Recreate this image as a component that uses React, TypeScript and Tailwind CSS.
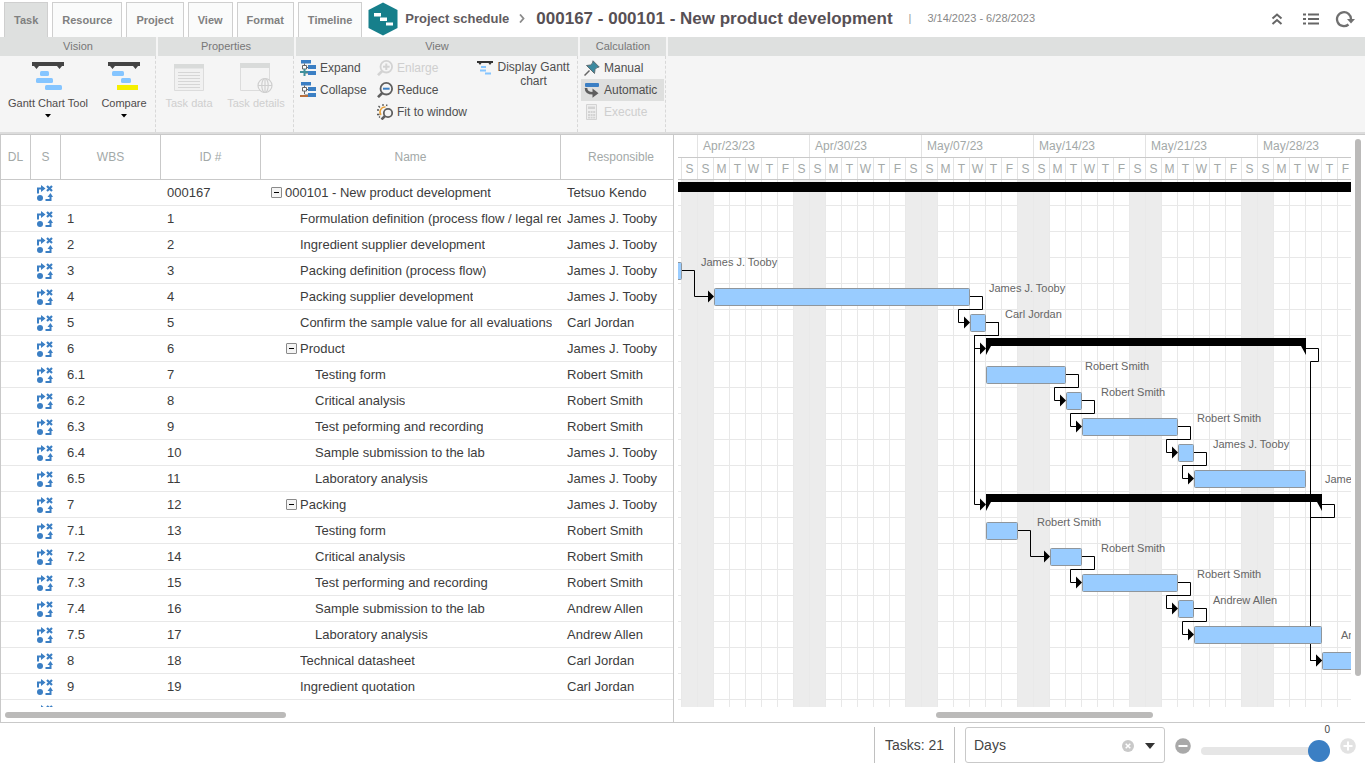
import React, { useState } from 'react';

type Row = {
  wbs: string;
  id: string;
  name: string;
  level: number;
  parent?: boolean;
  responsible: string;
  start?: number;
  days?: number;
};

// start is counted in days from the first Saturday of the chart
const rows: Row[] = [
  { wbs: '', id: '000167', name: '000101 - New product development', level: 0, parent: true, responsible: 'Tetsuo Kendo' },
  { wbs: '1', id: '1', name: 'Formulation definition (process flow / legal req', level: 1, responsible: 'James J. Tooby' },
  { wbs: '2', id: '2', name: 'Ingredient supplier development', level: 1, responsible: 'James J. Tooby' },
  { wbs: '3', id: '3', name: 'Packing definition (process flow)', level: 1, responsible: 'James J. Tooby', start: -3, days: 3 },
  { wbs: '4', id: '4', name: 'Packing supplier development', level: 1, responsible: 'James J. Tooby', start: 2, days: 16 },
  { wbs: '5', id: '5', name: 'Confirm the sample value for all evaluations', level: 1, responsible: 'Carl Jordan', start: 18, days: 1 },
  { wbs: '6', id: '6', name: 'Product', level: 1, parent: true, responsible: 'James J. Tooby', start: 19, days: 20 },
  { wbs: '6.1', id: '7', name: 'Testing form', level: 2, responsible: 'Robert Smith', start: 19, days: 5 },
  { wbs: '6.2', id: '8', name: 'Critical analysis', level: 2, responsible: 'Robert Smith', start: 24, days: 1 },
  { wbs: '6.3', id: '9', name: 'Test peforming and recording', level: 2, responsible: 'Robert Smith', start: 25, days: 6 },
  { wbs: '6.4', id: '10', name: 'Sample submission to the lab', level: 2, responsible: 'James J. Tooby', start: 31, days: 1 },
  { wbs: '6.5', id: '11', name: 'Laboratory analysis', level: 2, responsible: 'James J. Tooby', start: 32, days: 7 },
  { wbs: '7', id: '12', name: 'Packing', level: 1, parent: true, responsible: 'James J. Tooby', start: 19, days: 21 },
  { wbs: '7.1', id: '13', name: 'Testing form', level: 2, responsible: 'Robert Smith', start: 19, days: 2 },
  { wbs: '7.2', id: '14', name: 'Critical analysis', level: 2, responsible: 'Robert Smith', start: 23, days: 2 },
  { wbs: '7.3', id: '15', name: 'Test performing and recording', level: 2, responsible: 'Robert Smith', start: 25, days: 6 },
  { wbs: '7.4', id: '16', name: 'Sample submission to the lab', level: 2, responsible: 'Andrew Allen', start: 31, days: 1 },
  { wbs: '7.5', id: '17', name: 'Laboratory analysis', level: 2, responsible: 'Andrew Allen', start: 32, days: 8 },
  { wbs: '8', id: '18', name: 'Technical datasheet', level: 1, responsible: 'Carl Jordan', start: 40, days: 8 },
  { wbs: '9', id: '19', name: 'Ingredient quotation', level: 1, responsible: 'Carl Jordan' },
  { wbs: '', id: '', name: '', level: 1, responsible: '' },
];

// [from row, to row]
const links = [
  [3, 4], [4, 5], [5, 6], [5, 12], [7, 8], [8, 9], [9, 10], [10, 11],
  [13, 14], [14, 15], [15, 16], [16, 17], [6, 18], [12, 18],
];

const weeks = ['Apr/23/23', 'Apr/30/23', 'May/07/23', 'May/14/23', 'May/21/23', 'May/28/23'];
const weekDays = ['S', 'M', 'T', 'W', 'T', 'F', 'S'];
const tabs = ['Task', 'Resource', 'Project', 'View', 'Format', 'Timeline'];
const indents = ['pl-[10px]', 'pl-[25px]', 'pl-[40px]'];

const ROW = 26;
const DAY = 16;
const dayX = (day: number) => 4 + day * DAY;

const StatusIcon = () => (
  <svg width="16" height="16" viewBox="0 0 16 16" className="block" aria-hidden="true">
    <g fill="none" stroke="#3b7fc4" strokeWidth="2">
      <path d="M1 8.500V3.500H5" />
      <path d="M10 1L15 6M15 1L10 6" strokeWidth="2.200" />
      <path d="M8.500 15H13.500V11" />
    </g>
    <path d="M4 0L8.500 3.500L4 7ZM10.500 12L13.500 8L16 12Z" fill="#3b7fc4" />
    <circle cx="3" cy="13" r="3" fill="#3b7fc4" />
  </svg>
);

const GanttToolIcon = ({ compare }: { compare?: boolean }) => (
  <svg width="32" height="29" viewBox="0 0 32 29" className="block" aria-hidden="true">
    <path d="M0 0H32V4H30L27.500 7L25 4H7L4.500 7L2 4H0Z" fill="#444" />
    {compare ? (
      <>
        <rect x="4" y="9" width="12" height="5" rx="1.500" fill="#85c5ff" />
        <rect x="13" y="16" width="10" height="5" rx="1.500" fill="#85c5ff" />
        <rect x="9" y="23" width="21" height="5" fill="#f5ef00" />
      </>
    ) : (
      <>
        <rect x="8" y="9" width="9" height="5" rx="1.500" fill="#85c5ff" />
        <rect x="4" y="16" width="17" height="5" rx="1.500" fill="#85c5ff" />
        <rect x="13" y="23" width="17" height="5" rx="1.500" fill="#85c5ff" />
      </>
    )}
  </svg>
);

const TaskDataIcon = () => (
  <svg width="32" height="29" viewBox="0 0 32 29" className="block" aria-hidden="true">
    <path d="M1.500 2.500H30.500V28.500H1.500Z" fill="#f1f1f1" stroke="#dcdcdc" />
    <path d="M1 2H31V6.500H1Z" fill="#d9dbda" />
    <path d="M5 10.500H27M5 13.500H27M5 16.500H27M5 19.500H27M5 22.500H27M5 25.500H27" stroke="#d6d6d6" />
  </svg>
);

const TaskDetailsIcon = () => (
  <svg width="34" height="31" viewBox="0 0 34 31" className="block" aria-hidden="true">
    <path d="M1.500 1.500H30.500V28.500H1.500Z" fill="#f4f4f4" stroke="#dcdcdc" />
    <path d="M1 1H31V6H1Z" fill="#d9dbda" />
    <g fill="#f4f4f4" stroke="#cfcfcf" strokeWidth="1.200">
      <circle cx="26" cy="23.500" r="7" />
      <ellipse cx="26" cy="23.500" rx="3.200" ry="7" />
      <path d="M19 23.500H33M26 16.500V30.500" />
    </g>
  </svg>
);

const TreeIcon = ({ collapse }: { collapse?: boolean }) => (
  <svg width="16" height="16" viewBox="0 0 16 16" className="block shrink-0" aria-hidden="true">
    <path d="M1 0H11V3.500H1ZM8 5H16V9H8ZM8 11H16V15H8Z" fill="#3b7fc4" />
    <path d="M4.500 3.500V12M4.500 7.500H8M4.500 13H8" stroke="#666" fill="none" />
    <path d="M2.500 5.500H6.500V9H2.500Z" fill="#fff" stroke="#666" />
    {collapse ? (
      <path d="M0 14H8" stroke="#b96f3c" strokeWidth="2" />
    ) : (
      <path d="M0 12H8M4.500 9V16" stroke="#3f8f9b" strokeWidth="2" />
    )}
  </svg>
);

const MagnifierIcon = ({ kind }: { kind: 'plus' | 'minus' | 'fit' }) => {
  const color = kind === 'plus' ? '#d3d3d3' : '#5f5f5f';
  return (
    <svg width="16" height="16" viewBox="0 0 16 16" className="block shrink-0" aria-hidden="true">
      {kind === 'fit' ? (
        <>
          <path d="M0 6H2M1.500 2L3 3.500M6 0V2M10 .500L9.500 2M0 10.500H2.500M2 13.500L3 12.500" stroke="#555" strokeWidth="1.300" />
          <path d="M4 11A5 5 0 0 1 8.500 3" stroke="#e9a23b" strokeWidth="1.500" fill="none" />
          <circle cx="11" cy="9" r="4.200" fill="#f4f4f4" stroke={color} strokeWidth="1.800" />
          <path d="M8 12L4.500 15.500" stroke={color} strokeWidth="2.500" />
        </>
      ) : (
        <>
          <circle cx="9.300" cy="6.700" r="5.800" fill="none" stroke={color} strokeWidth="1.800" />
          <path d="M5.200 11L1 15.200" stroke={color} strokeWidth="2.600" />
          <path d="M6 6.700H12.600" stroke={kind === 'plus' ? color : '#3b7fc4'} strokeWidth="2" />
          {kind === 'plus' && <path d="M9.300 3.500V10" stroke={color} strokeWidth="2" />}
        </>
      )}
    </svg>
  );
};

const DisplayIcon = () => (
  <svg width="16" height="15" viewBox="0 0 16 15" className="block shrink-0" aria-hidden="true">
    <path d="M0 1H16V3H14.500L13 5L11.500 3H4.500L3 5L1.500 3H0Z" fill="#333" />
    <path d="M4 6H9V8H4ZM3 9.500H9V11.500H3ZM8 12.500H14V14.500H8Z" fill="#85c5ff" />
  </svg>
);

const PinIcon = () => (
  <svg width="16" height="16" viewBox="0 0 16 16" className="block shrink-0" aria-hidden="true">
    <path d="M5.500 10.500L.500 15.500" stroke="#666" strokeWidth="1.500" />
    <path d="M9 .800L15.200 7L13 7.500L11 9.500L10.500 13.500L2.500 5.500L6.500 5L8.600 3Z" fill="#3c8aa0" stroke="#5f6d72" />
  </svg>
);

const AutomaticIcon = () => (
  <svg width="16" height="16" viewBox="0 0 16 16" className="block shrink-0" aria-hidden="true">
    <rect x="1" y="1" width="14" height="4" rx="1" fill="#3b7fc4" />
    <path d="M2 6C2 9.500 4.500 11.300 9 11.300" fill="none" stroke="#5f5f5f" strokeWidth="2.600" />
    <path d="M8.500 6.500L14.500 11.300L8.500 15.800Z" fill="#5f5f5f" />
  </svg>
);

const CalculatorIcon = () => (
  <svg width="16" height="16" viewBox="0 0 16 16" className="block shrink-0" aria-hidden="true">
    <path d="M2.500 .500H12.500V15.500H2.500Z" fill="#eee" stroke="#d3d3d3" />
    <path d="M4 2.500H11V5H4ZM4 7H6V9H4ZM6.600 7H8.600V9H6.600ZM9.200 7H11.200V9H9.200ZM4 10H6V12H4ZM6.600 10H8.600V12H6.600ZM9.200 10H11.200V12H9.200ZM4 12.700H6V14.500H4ZM6.600 12.700H8.600V14.500H6.600ZM9.200 12.700H11.200V14.500H9.200Z" fill="#d3d3d3" />
  </svg>
);

type GroupProps = { title?: string; className: string; children?: React.ReactNode };

const RibbonGroup: React.FC<GroupProps> = ({ title, className, children }) => (
  <section className={`flex flex-col ${className}`}>
    <h2 className="h-[19px] bg-[#dee0df] text-center text-[11px] leading-[18px] text-[#777]">{title}</h2>
    <div className={`flex flex-1 ${title ? 'border-r border-dashed border-[#d8d8d8]' : ''}`}>{children}</div>
  </section>
);

type ToolProps = { icon: React.ReactNode; label: string; disabled?: boolean; active?: boolean };

const SmallTool: React.FC<ToolProps> = ({ icon, label, disabled, active }) => (
  <button
    type="button"
    disabled={disabled}
    className={`flex h-[22px] w-full items-center gap-1 text-left text-[12px] whitespace-nowrap ${
      disabled ? 'text-[#cfcfcf]' : 'text-[#4f4f4f]'
    } ${active ? 'bg-[#dedfde]' : ''}`}
  >
    {icon}
    {label}
  </button>
);

type LargeToolProps = ToolProps & { menu?: boolean; className: string };

const LargeTool: React.FC<LargeToolProps> = ({ icon, label, disabled, menu, className }) => (
  <button
    type="button"
    disabled={disabled}
    className={`flex flex-col items-center pt-[6px] text-[11px] leading-[14px] whitespace-nowrap ${className} ${
      disabled ? 'text-[#cfcfcf]' : 'text-[#4f4b4b]'
    }`}
  >
    <span className="flex h-[34px] items-start">{icon}</span>
    {label}
    {menu && (
      <svg width="6" height="4" viewBox="0 0 6 4" className="mt-1" aria-hidden="true">
        <path d="M0 0H6L3 3.500Z" fill="#000" />
      </svg>
    )}
  </button>
);

const TaskTable = () => (
  <table className="w-full table-fixed border-separate border-spacing-0 text-[13px] text-[#3c3c3c]">
    <colgroup>
      <col className="w-[30px]" />
      <col className="w-[30px]" />
      <col className="w-[100px]" />
      <col className="w-[100px]" />
      <col className="w-[300px]" />
      <col />
    </colgroup>
    <thead>
      <tr className="h-[45px] text-[12px] text-[#a3a9a8]">
        {['DL', 'S', 'WBS', 'ID #', 'Name', 'Responsible'].map((title) => (
          <th key={title} className="border-r border-b border-[#c9c9c9] p-0 font-normal last:border-r-0 last:pl-2">
            {title}
          </th>
        ))}
      </tr>
    </thead>
    <tbody>
      {rows.map((row, i) => (
        <tr key={i} className="h-[26px] *:border-b *:border-[#e8e8e8] *:p-0">
          <td />
          <td>
            <div className="ml-[6px]">
              <StatusIcon />
            </div>
          </td>
          <td>
            <div className="pl-[6px]">{row.wbs}</div>
          </td>
          <td>
            <div className="pl-[6px]">{row.id}</div>
          </td>
          <td>
            <div className={`flex items-center gap-[3px] overflow-hidden whitespace-nowrap ${indents[row.level]}`}>
              {row.parent ? (
                <button
                  type="button"
                  aria-label={`Collapse ${row.name}`}
                  className="flex size-[11px] shrink-0 items-center justify-center rounded-[1px] border border-[#8a8a8a] bg-[#f4f4f4]"
                >
                  <span className="h-px w-[5px] bg-black" />
                </button>
              ) : (
                <span className="w-[11px] shrink-0" />
              )}
              <span className="min-w-0 overflow-hidden">{row.name}</span>
            </div>
          </td>
          <td>
            <div className="pl-[6px]">{row.responsible}</div>
          </td>
        </tr>
      ))}
    </tbody>
  </table>
);

const TimeHeader = () => (
  <div className="shrink-0 overflow-hidden text-[12px] text-[#a3a9a8]">
    <div className="flex h-[23px] border-b border-[#c9c9c9]">
      <div className="w-[19px] shrink-0" />
      {weeks.map((week) => (
        <div key={week} className="w-[112px] shrink-0 border-l border-[#e3e3e3] pl-[5px] leading-[22px]">
          {week}
        </div>
      ))}
    </div>
    <div className="flex h-[22px] border-b border-[#c9c9c9] leading-[22px]">
      <div className="w-[3px] shrink-0" />
      <div className="w-4 shrink-0 border-l border-[#e3e3e3] text-center">S</div>
      {weeks.map((week) =>
        weekDays.map((day, i) => (
          <div key={week + i} className="w-4 shrink-0 border-l border-[#e3e3e3] text-center">
            {day}
          </div>
        ))
      )}
    </div>
  </div>
);

const linkPath = (from: number, to: number) => {
  const x1 = dayX(rows[from].start! + rows[from].days!);
  const x2 = dayX(rows[to].start!);
  const y1 = from * ROW + 12.5;
  const y2 = to * ROW + 12.5;
  if (x2 - x1 > 24) {
    return `M${x1} ${y1}H${x1 + 12.5}V${y2}H${x2 - 5}`;
  }
  return `M${x1} ${y1}H${x1 + 12.5}V${y1 + 13}H${x2 - 11.5}V${y2}H${x2 - 5}`;
};

const GanttChart = () => (
  <svg width="100%" height="100%" className="block" role="img" aria-label="Gantt chart">
    <defs>
      <pattern id="rowLines" width="16" height="26" patternUnits="userSpaceOnUse">
        <path d="M0 25.500H16" stroke="#e8e8e8" />
      </pattern>
      <pattern id="week" x="3" width="112" height="26" patternUnits="userSpaceOnUse">
        <path d="M48.500 0V26M64.500 0V26M80.500 0V26M96.500 0V26" stroke="#e8e8e8" />
        <rect width="33" height="26" fill="#ececec" />
        <path d="M.500 0V26M16.500 0V26M32.500 0V26" stroke="#e9e9e9" />
      </pattern>
    </defs>
    <rect width="100%" height="100%" fill="url(#rowLines)" />
    <rect width="100%" height="100%" fill="url(#week)" />
    <rect y="2" width="100%" height="10" />
    {links.map(([from, to]) => {
      const x = dayX(rows[to].start!);
      const y = to * ROW + 12.5;
      return (
        <g key={`${from}-${to}`}>
          <path d={linkPath(from, to)} fill="none" stroke="#000" />
          <path d={`M${x - 6} ${y - 6}L${x} ${y}L${x - 6} ${y + 6}Z`} />
        </g>
      );
    })}
    {rows.map((row, i) => {
      if (row.start === undefined || row.days === undefined) return null;
      const x = dayX(row.start);
      const w = row.days * DAY;
      const y = i * ROW;
      if (row.parent) {
        return <path key={i} d={`M${x} ${y + 2}h${w}v17l-5 -9h${10 - w}l-5 9Z`} />;
      }
      // the last task of a branch has its label beside the bar
      const linked = links.some(([from]) => from === i);
      return (
        <g key={i}>
          <rect x={x + 0.5} y={y + 4.5} width={w - 1} height="17" rx="1" fill="#99ccff" stroke="#8f969c" />
          <text x={x + w + 19} y={y + (linked ? 8 : 17)} fontSize="11" fill="#666">
            {row.responsible}
          </text>
        </g>
      );
    })}
  </svg>
);

const App: React.FC = () => {
  const [activeTab, setActiveTab] = useState('Task');
  const [unit, setUnit] = useState('Days');
  const [zoom, setZoom] = useState(0);

  return (
    <div className="flex h-screen flex-col overflow-hidden bg-white font-['Liberation_Sans',Arial,sans-serif]">
      <header className="flex h-[37px] shrink-0 items-center pl-1">
        <nav className="flex gap-1 self-end">
          {tabs.map((tab) => (
            <button
              key={tab}
              type="button"
              onClick={() => setActiveTab(tab)}
              className={`h-[35px] border border-b-0 border-[#cfcfcf] px-[9px] text-[11px] font-bold text-[#808080] ${
                activeTab === tab ? 'bg-[#dee0df]' : 'bg-[#fafbfb]'
              }`}
            >
              {tab}
            </button>
          ))}
        </nav>
        <svg width="30" height="34" viewBox="0 0 30 34" className="ml-[6px] shrink-0" aria-hidden="true">
          <path d="M15 .500L29.500 8V26L15 33.500L.500 26V8Z" fill="#167f8b" />
          <path d="M6 11H13V14.500H6ZM12 15.500H19V19H12ZM18 20.500H25V23.500H18Z" fill="#fff" />
        </svg>
        <span className="ml-[7px] text-[13px] font-bold whitespace-nowrap text-[#625c60]">Project schedule</span>
        <svg width="6" height="9" viewBox="0 0 6 9" className="ml-[10px] shrink-0" aria-hidden="true">
          <path d="M1 .500L4.500 4.500L1 8.500" fill="none" stroke="#8b8b8b" strokeWidth="1.800" />
        </svg>
        <h1 className="ml-[11px] text-[17px] font-bold whitespace-nowrap text-[#575055]">
          000167 - 000101 - New product development
        </h1>
        <span className="ml-4 text-[11px] text-[#999]">|</span>
        <span className="ml-4 text-[11px] whitespace-nowrap text-[#888]">3/14/2023 - 6/28/2023</span>
        <div className="ml-auto flex items-center gap-5 pr-[10px]">
          <button type="button" aria-label="Collapse ribbon">
            <svg width="12" height="14" viewBox="0 0 12 14" className="block">
              <path d="M1.500 6.500L6 2.500L10.500 6.500M1.500 12L6 8L10.500 12" fill="none" stroke="#666" strokeWidth="2" />
            </svg>
          </button>
          <button type="button" aria-label="List">
            <svg width="16" height="12" viewBox="0 0 16 12" className="block">
              <path d="M0 1.500H3M0 6H3M0 10.500H3M5 1.500H16M5 6H16M5 10.500H16" stroke="#666" strokeWidth="2" />
            </svg>
          </button>
          <button type="button" aria-label="Refresh" className="-ml-1">
            <svg width="20" height="20" viewBox="0 0 20 20" className="block">
              <path d="M13.500 15.500A7 7 0 1 1 16 10.500" fill="none" stroke="#707070" strokeWidth="2.300" />
              <path d="M12 10H20L16 14.500Z" fill="#707070" />
            </svg>
          </button>
        </div>
      </header>

      <div className="flex h-[97px] shrink-0 gap-[2px] border-b-2 border-[#dcdcdc] bg-[#f5f5f5]">
        <RibbonGroup title="Vision" className="w-[156px]">
          <LargeTool className="ml-[6px] w-[84px]" icon={<GanttToolIcon />} label="Gantt Chart Tool" menu />
          <LargeTool className="ml-[7px] w-[54px]" icon={<GanttToolIcon compare />} label="Compare" menu />
        </RibbonGroup>
        <RibbonGroup title="Properties" className="w-[136px]">
          <LargeTool className="ml-1 w-[54px]" icon={<TaskDataIcon />} label="Task data" disabled />
          <LargeTool className="ml-[9px] w-[62px]" icon={<TaskDetailsIcon />} label="Task details" disabled />
        </RibbonGroup>
        <RibbonGroup title="View" className="w-[282px]">
          <div className="ml-1 w-[77px] pt-px">
            <SmallTool icon={<TreeIcon />} label="Expand" />
            <SmallTool icon={<TreeIcon collapse />} label="Collapse" />
          </div>
          <div className="w-[100px] pt-px">
            <SmallTool icon={<MagnifierIcon kind="plus" />} label="Enlarge" disabled />
            <SmallTool icon={<MagnifierIcon kind="minus" />} label="Reduce" />
            <SmallTool icon={<MagnifierIcon kind="fit" />} label="Fit to window" />
          </div>
          <button type="button" className="flex items-start gap-1 pt-1 text-[12px] leading-[14px] text-[#4f4f4f]">
            <DisplayIcon />
            <span className="w-[73px] text-center">Display Gantt chart</span>
          </button>
        </RibbonGroup>
        <RibbonGroup title="Calculation" className="w-[86px]">
          <div className="flex-1 pt-px pr-px pl-px *:pl-[3px]">
            <SmallTool icon={<PinIcon />} label="Manual" />
            <SmallTool icon={<AutomaticIcon />} label="Automatic" active />
            <SmallTool icon={<CalculatorIcon />} label="Execute" disabled />
          </div>
        </RibbonGroup>
        <RibbonGroup className="flex-1" />
      </div>

      <main className="flex min-h-0 flex-1 border-t border-b border-[#c9c9c9]">
        <div className="flex w-[674px] shrink-0 flex-col border-r border-l border-[#c9c9c9]">
          <div className="min-h-0 flex-1 overflow-hidden">
            <TaskTable />
          </div>
          <div className="flex h-[15px] shrink-0 items-center">
            <div className="ml-1 h-[6px] w-[281px] rounded-full bg-[#bbbab9]" />
          </div>
        </div>
        <div className="ml-1 flex min-w-0 flex-1 flex-col">
          <TimeHeader />
          <div className="min-h-0 flex-1 overflow-hidden">
            <GanttChart />
          </div>
          <div className="flex h-[15px] shrink-0 items-center">
            <div className="ml-[258px] h-[6px] w-[217px] rounded-full bg-[#bbbab9]" />
          </div>
        </div>
        <div className="w-[14px] shrink-0 pt-1 pl-1">
          <div className="h-[537px] max-h-full w-[6px] rounded-full bg-[#bbbab9]" />
        </div>
      </main>

      <footer className="flex h-11 shrink-0 items-center justify-end pr-[9px] text-[14px] text-[#444]">
        <div className="flex h-9 w-[81px] items-center justify-center border-r border-l border-[#c0c0c0]">Tasks: 21</div>
        <div className="relative ml-[10px] h-9 w-[200px]">
          <select
            aria-label="Time unit"
            value={unit}
            onChange={(e) => setUnit(e.target.value)}
            className="h-full w-full appearance-none rounded-[3px] border border-[#c9c9c9] bg-white pt-px pl-2"
          >
            <option>Days</option>
            <option>Weeks</option>
            <option>Months</option>
          </select>
          <button type="button" aria-label="Clear" className="absolute top-[13px] right-[31px]">
            <svg width="12" height="12" viewBox="0 0 12 12" className="block">
              <circle cx="6" cy="6" r="6" fill="#c9c9c9" />
              <path d="M3.700 3.700L8.300 8.300M8.300 3.700L3.700 8.300" stroke="#fff" strokeWidth="1.500" />
            </svg>
          </button>
          <svg width="10" height="6" viewBox="0 0 10 6" className="pointer-events-none absolute top-4 right-[10px]" aria-hidden="true">
            <path d="M0 0H10L5 6Z" fill="#333" />
          </svg>
        </div>
        <button type="button" aria-label="Zoom out" className="mt-[2px] ml-[10px]" onClick={() => setZoom(Math.max(zoom - 1, -10))}>
          <svg width="16" height="16" viewBox="0 0 16 16" className="block">
            <circle cx="8" cy="8" r="7.800" fill="#a9a9a9" />
            <path d="M3.500 8H12.500" stroke="#fff" strokeWidth="2" />
          </svg>
        </button>
        <div className="ml-[10px] flex w-[129px] flex-col items-end self-start">
          <output htmlFor="zoom" className="text-[10px] leading-[13px]">{zoom}</output>
          <input
            id="zoom"
            type="range"
            aria-label="Zoom"
            min={-10}
            max={0}
            value={zoom}
            onChange={(e) => setZoom(Number(e.target.value))}
            className="mt-1 h-[22px] w-full appearance-none bg-transparent [&::-webkit-slider-runnable-track]:h-2 [&::-webkit-slider-runnable-track]:rounded-full [&::-webkit-slider-runnable-track]:bg-[#e6e6e6] [&::-webkit-slider-thumb]:-mt-[7px] [&::-webkit-slider-thumb]:size-[22px] [&::-webkit-slider-thumb]:appearance-none [&::-webkit-slider-thumb]:rounded-full [&::-webkit-slider-thumb]:bg-[#3b7fc4]"
          />
        </div>
        <button type="button" aria-label="Zoom in" className="mt-[2px] ml-[10px]" onClick={() => setZoom(Math.min(zoom + 1, 0))}>
          <svg width="16" height="16" viewBox="0 0 16 16" className="block">
            <circle cx="8" cy="8" r="7.800" fill="#e2e2e2" />
            <path d="M3.500 8H12.500M8 3.500V12.500" stroke="#fff" strokeWidth="2" />
          </svg>
        </button>
      </footer>
    </div>
  );
};

export default App;
